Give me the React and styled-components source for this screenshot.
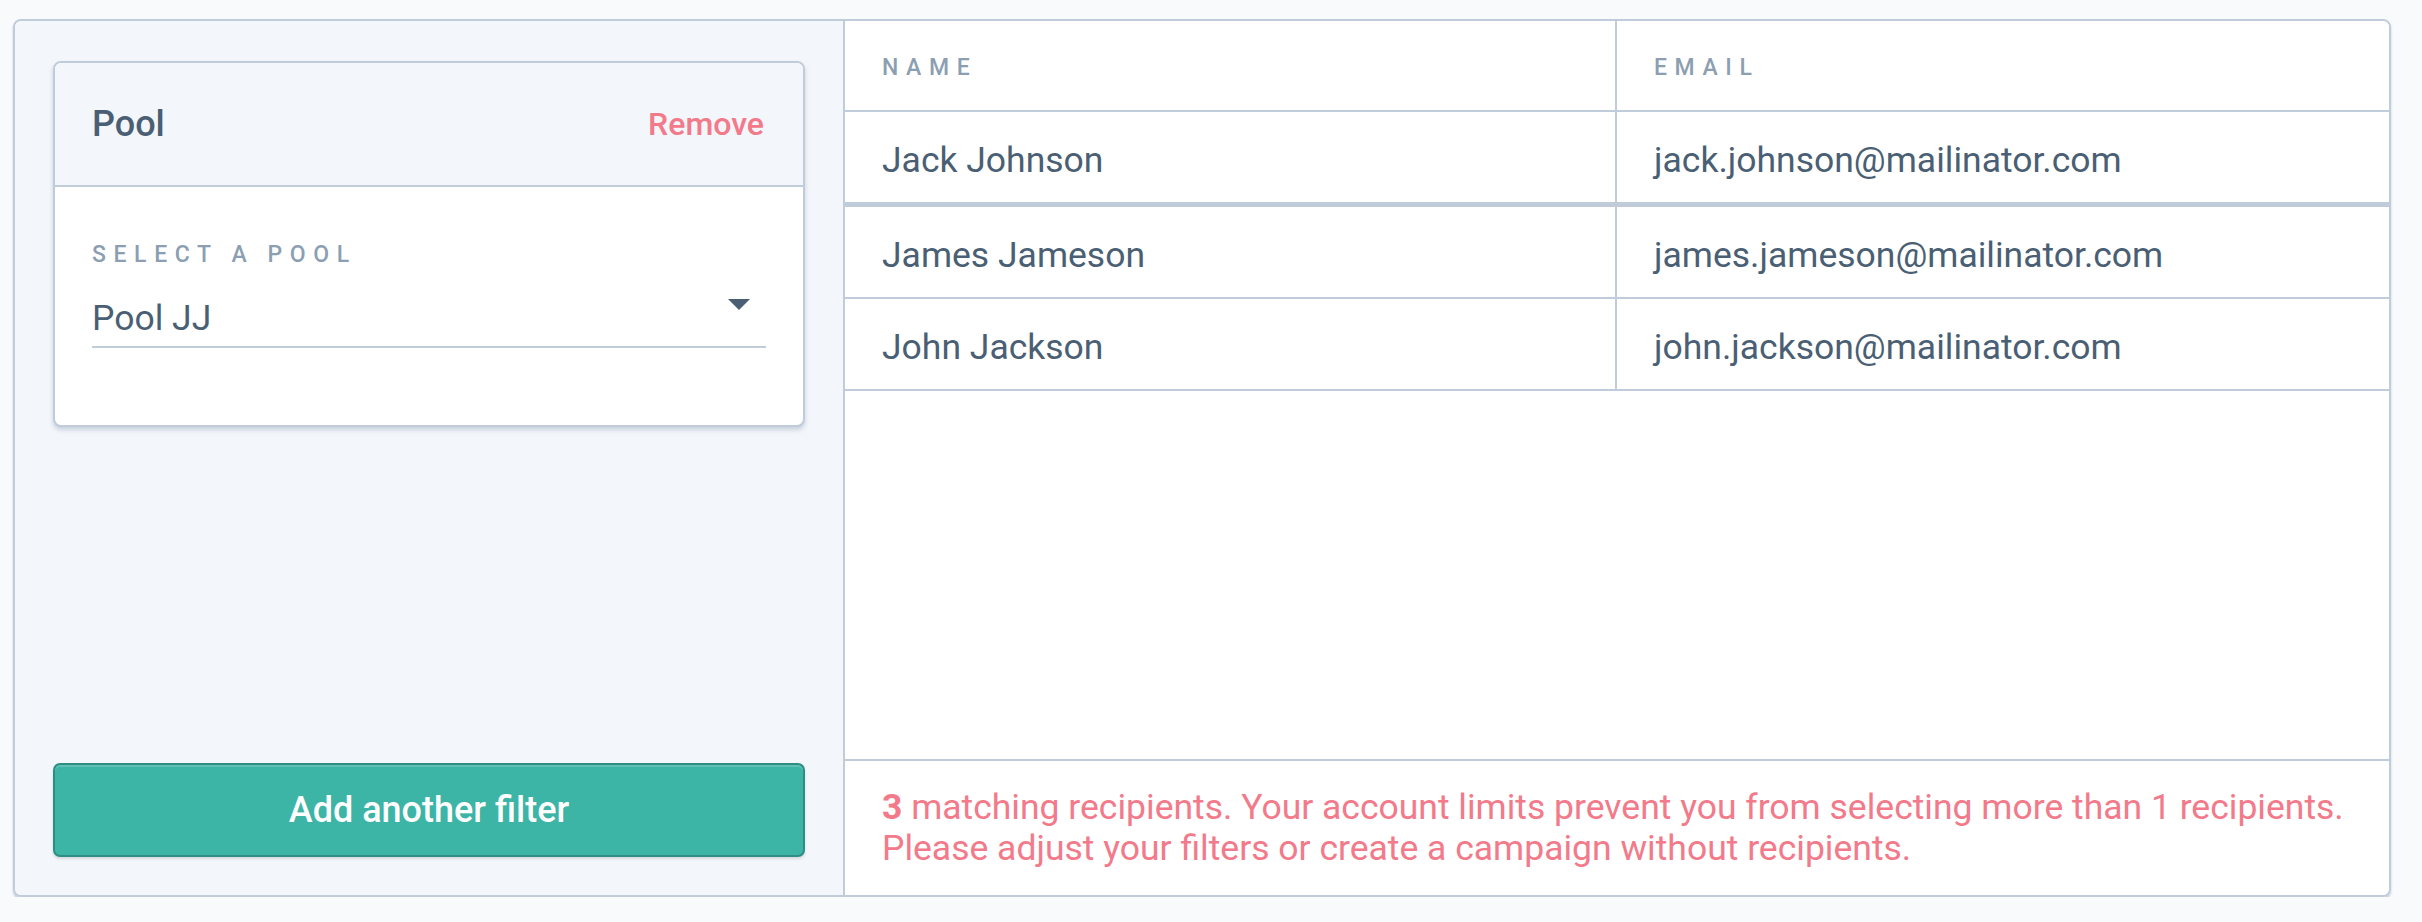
import React from 'react'
import styled, { createGlobalStyle } from 'styled-components'

const borde = '#c0ccda'
const textoEscuro = '#4a5f74'
const cinzaLabel = '#8c9fb2'
const rosa = '#f27a8a'

const recipients = [
    { name: 'Jack Johnson', email: 'jack.johnson@mailinator.com' },
    { name: 'James Jameson', email: 'james.jameson@mailinator.com' },
    { name: 'John Jackson', email: 'john.jackson@mailinator.com' },
]

const GlobalStyle = createGlobalStyle`
    body {
        margin: 0;
        background-color: #f8fafc;
        font-family: Roboto, "Noto Sans", "Liberation Sans", sans-serif;
    }
    * { box-sizing: border-box; }
`

const App = () => {
    return (
        <Page>
            <GlobalStyle />
            <Container>
                <FiltersPanel>
                    <Card>
                        <CardHeader>
                            <CardTitle>Pool</CardTitle>
                            <RemoveLink>Remove</RemoveLink>
                        </CardHeader>
                        <CardBody>
                            <SmallLabel>Select a pool</SmallLabel>
                            <SelectRow>
                                <SelectValue>Pool JJ</SelectValue>
                                <svg width="22" height="11" viewBox="0 0 22 11" style={{ marginTop: 1, marginRight: 16 }}>
                                    <path d="M0 0 H22 L11 11 Z" fill={textoEscuro} />
                                </svg>
                            </SelectRow>
                        </CardBody>
                    </Card>
                    <AddButton type="button">Add another filter</AddButton>
                </FiltersPanel>

                <ResultsPanel>
                    <TableRow>
                        <HeaderCell $first>Name</HeaderCell>
                        <HeaderCell>Email</HeaderCell>
                    </TableRow>
                    {recipients.map((r, i) => (
                        <TableRow key={r.email} $thick={i === 0}>
                            <Cell $first>{r.name}</Cell>
                            <Cell>{r.email}</Cell>
                        </TableRow>
                    ))}
                    <Footer>
                        <strong>3</strong> matching recipients. Your account limits prevent you from selecting more than 1 recipients.
                        <br />
                        Please adjust your filters or create a campaign without recipients.
                    </Footer>
                </ResultsPanel>
            </Container>
        </Page>
    )
}

const Page = styled.div`
    padding: 19px 31px 0 13px;
`

const Container = styled.div`
    display: grid;
    grid-template-columns: 830px 1fr;
    height: 878px;
    border: 2px solid ${borde};
    border-radius: 8px;
    overflow: hidden;
    box-shadow: 0 2px 2px rgba(120, 142, 168, 0.45);
`

const FiltersPanel = styled.div`
    display: flex;
    flex-direction: column;
    justify-content: space-between;
    padding: 40px 38px 38px 38px;
    background-color: #f3f6fa;
    border-right: 2px solid ${borde};
`

const Card = styled.div`
    background-color: white;
    border: 2px solid ${borde};
    border-radius: 8px;
    overflow: hidden;
    box-shadow: 0 3px 4px rgba(120, 142, 168, 0.35);
`

const CardHeader = styled.div`
    display: flex;
    justify-content: space-between;
    align-items: center;
    height: 124px;
    padding: 0 39px 0 37px;
    background-color: #f3f6fa;
    border-bottom: 2px solid ${borde};
`

const CardTitle = styled.span`
    font-size: 36px;
    line-height: 40px;
    font-weight: 500;
    color: ${textoEscuro};
`

const RemoveLink = styled.span`
    font-size: 32px;
    line-height: 40px;
    font-weight: 500;
    color: ${rosa};
    cursor: pointer;
`

const CardBody = styled.div`
    padding: 55px 37px 77px;
`

const SmallLabel = styled.div`
    font-size: 23px;
    line-height: 26px;
    font-weight: 500;
    letter-spacing: 7.6px;
    text-transform: uppercase;
    color: ${cinzaLabel};
`

const SelectRow = styled.div`
    display: flex;
    justify-content: space-between;
    align-items: flex-start;
    margin-top: 30px;
    padding-bottom: 8px;
    border-bottom: 2px solid ${borde};
`

const SelectValue = styled.span`
    font-size: 35.5px;
    line-height: 40px;
    color: ${textoEscuro};
`

const AddButton = styled.button`
    width: 100%;
    height: 94px;
    background-color: #3cb4a6;
    border: 2px solid #2f8e83;
    border-radius: 7px;
    color: white;
    font-family: Roboto, "Noto Sans", sans-serif;
    font-size: 36px;
    font-weight: 500;
    box-shadow: inset 0 2px 0 rgba(255, 255, 255, 0.18), 0 2px 3px rgba(0, 0, 0, 0.12);
    cursor: pointer;
`

const ResultsPanel = styled.div`
    display: flex;
    flex-direction: column;
    background-color: white;
`

const TableRow = styled.div`
    display: grid;
    grid-template-columns: 1fr 1fr;
    border-bottom: ${(p) => (p.$thick ? '5px' : '2px')} solid ${borde};
`

const HeaderCell = styled.div`
    height: 89px;
    padding: 34px 37px 0;
    font-size: 23px;
    line-height: 26px;
    font-weight: 500;
    letter-spacing: 7.6px;
    text-transform: uppercase;
    color: ${cinzaLabel};
    border-right: ${(p) => (p.$first ? `2px solid ${borde}` : 'none')};
`

const Cell = styled.div`
    height: 90px;
    padding: 28px 37px 0;
    font-size: 35.5px;
    line-height: 40px;
    color: ${textoEscuro};
    border-right: ${(p) => (p.$first ? `2px solid ${borde}` : 'none')};
`

const Footer = styled.div`
    margin-top: auto;
    padding: 26px 37px;
    border-top: 2px solid ${borde};
    font-size: 35.5px;
    line-height: 41px;
    white-space: nowrap;
    color: ${rosa};

    strong {
        font-weight: 700;
    }
`

export default App
